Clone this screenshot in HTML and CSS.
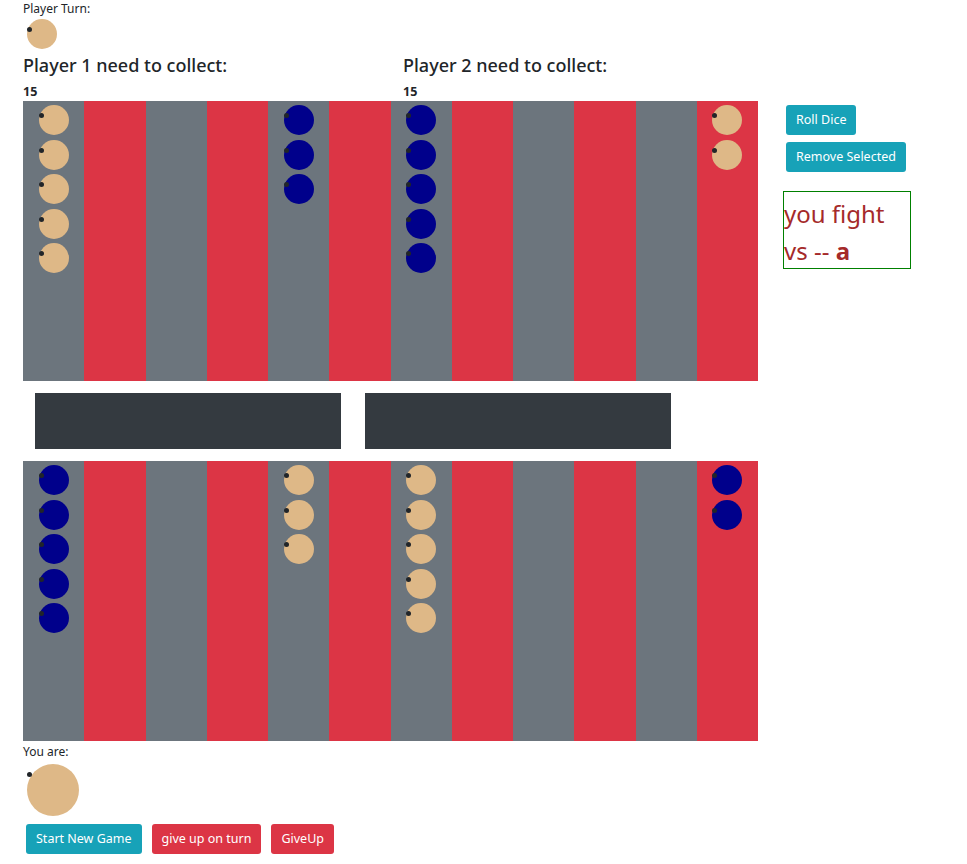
FILE: index.html
```html
<!DOCTYPE html>
<html>
<head>
<meta charset="utf-8">
<link rel="stylesheet" href="styles.css">
</head>
<body>
<div class="page">
  <div class="label">Player Turn:</div>
  <div class="turn"><span class="piece tan"></span></div>
  <div class="collect">
    <div class="collect-col">
      <h5 class="collect-title">Player 1 need to collect:</h5>
      <div class="count">15</div>
    </div>
    <div class="collect-col">
      <h5 class="collect-title">Player 2 need to collect:</h5>
      <div class="count">15</div>
    </div>
  </div>
  <div class="main">
    <div class="boards">
      <div class="board">
        <div class="col gray"><span class="piece tan"></span><span class="piece tan"></span><span class="piece tan"></span><span class="piece tan"></span><span class="piece tan"></span></div>
        <div class="col red"></div>
        <div class="col gray"></div>
        <div class="col red"></div>
        <div class="col gray"><span class="piece blue"></span><span class="piece blue"></span><span class="piece blue"></span></div>
        <div class="col red"></div>
        <div class="col gray"><span class="piece blue"></span><span class="piece blue"></span><span class="piece blue"></span><span class="piece blue"></span><span class="piece blue"></span></div>
        <div class="col red"></div>
        <div class="col gray"></div>
        <div class="col red"></div>
        <div class="col gray"></div>
        <div class="col red"><span class="piece tan"></span><span class="piece tan"></span></div>
      </div>
      <div class="bars">
        <div class="bar"></div>
        <div class="bar"></div>
      </div>
      <div class="board">
        <div class="col gray"><span class="piece blue"></span><span class="piece blue"></span><span class="piece blue"></span><span class="piece blue"></span><span class="piece blue"></span></div>
        <div class="col red"></div>
        <div class="col gray"></div>
        <div class="col red"></div>
        <div class="col gray"><span class="piece tan"></span><span class="piece tan"></span><span class="piece tan"></span></div>
        <div class="col red"></div>
        <div class="col gray"><span class="piece tan"></span><span class="piece tan"></span><span class="piece tan"></span><span class="piece tan"></span><span class="piece tan"></span></div>
        <div class="col red"></div>
        <div class="col gray"></div>
        <div class="col red"></div>
        <div class="col gray"></div>
        <div class="col red"><span class="piece blue"></span><span class="piece blue"></span></div>
      </div>
    </div>
    <div class="side">
      <button class="btn info">Roll Dice</button>
      <button class="btn info">Remove Selected</button>
      <div class="fight">you fight vs -- <b>a</b></div>
    </div>
  </div>
  <div class="label bottom-label">You are:</div>
  <div class="me"><span class="piece tan big"></span></div>
  <div class="actions">
    <button class="btn info">Start New Game</button>
    <button class="btn danger">give up on turn</button>
    <button class="btn danger">GiveUp</button>
  </div>
</div>
</body>
</html>
```

FILE: styles.css
```css
* { box-sizing: border-box; }
body {
  margin: 0;
  font-family: "Noto Sans", "Open Sans", sans-serif;
  color: #212529;
  background: #fff;
}
.page {
  padding-left: 23px;
}
.label {
  font-size: 12px;
  line-height: 18px;
  height: 18px;
}
.bottom-label {
  padding-top: 2px;
  height: 19px;
}
.turn {
  padding: 1px 0 0 4px;
  height: 31px;
  display: flex;
}
.piece {
  position: relative;
  display: block;
  width: 30px;
  height: 30px;
  border-radius: 50%;
  flex: none;
}
.piece::before {
  content: "";
  position: absolute;
  left: 0;
  top: 8px;
  width: 5px;
  height: 5px;
  border-radius: 50%;
  background: #212529;
}
.piece.big {
  width: 52px;
  height: 52px;
}
.tan { background: #deb887; }
.blue { background: #00008b; }
.collect {
  display: flex;
  padding-top: 3px;
}
.collect-col {
  width: 380px;
}
.collect-title {
  margin: 0;
  font-size: 18px;
  font-weight: 500;
  line-height: 27px;
  height: 31px;
}
.count {
  font-size: 12.5px;
  font-weight: 700;
  line-height: 18px;
  height: 18px;
}
.main {
  display: flex;
  align-items: flex-start;
}
.boards {
  width: 735px;
}
.board {
  display: grid;
  grid-template-columns: repeat(12, 1fr);
  height: 280px;
}
.col {
  display: flex;
  flex-direction: column;
  align-items: center;
  padding-top: 4px;
  gap: 4.5px;
}
.gray { background: #6c757d; }
.red { background: #dc3545; }
.bars {
  display: flex;
  width: 660px;
  padding: 12px 0;
}
.bar {
  flex: 1;
  margin: 0 12px;
  height: 56px;
  background: #343a40;
}
.side {
  margin-left: 25px;
  padding-top: 4px;
  display: flex;
  flex-direction: column;
  align-items: flex-start;
}
.btn {
  font-family: "Noto Sans", "Open Sans", sans-serif;
  font-size: 12.5px;
  line-height: 18px;
  height: 30px;
  padding: 6px 10px;
  border: none;
  border-radius: 3px;
  color: #fff;
  cursor: pointer;
}
.side .btn {
  margin-left: 3px;
  margin-bottom: 7px;
}
.info { background: #17a2b8; }
.danger { background: #dc3545; }
.fight {
  margin-top: 12px;
  width: 128px;
  height: 78px;
  border: 1px solid green;
  color: #a52a2a;
  font-size: 24px;
  line-height: 37px;
  padding: 3px 0 0;
}
.fight b { font-weight: 700; }
.me {
  padding: 4px 0 0 4px;
  height: 64px;
}
.actions {
  display: flex;
  gap: 10px;
  padding-left: 3px;
}
```
